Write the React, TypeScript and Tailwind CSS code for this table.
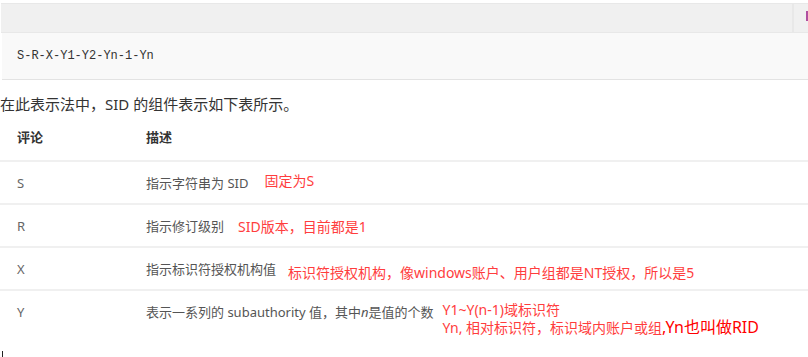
import React from "react";

const sans = "font-['Noto_Sans','Noto_Sans_CJK_SC',sans-serif]";

type Row = {
  key: string;
  desc: React.ReactNode;
  note: React.ReactNode;
  noteClass: string;
};

const rows: Row[] = [
  {
    key: "S",
    desc: "指示字符串为 SID",
    note: "固定为S",
    noteClass: "ml-[16px] -translate-y-[2px]",
  },
  {
    key: "R",
    desc: "指示修订级别",
    note: "SID版本，目前都是1",
    noteClass: "ml-[14px] translate-y-[1px]",
  },
  {
    key: "X",
    desc: "指示标识符授权机构值",
    note: "标识符授权机构，像windows账户、用户组都是NT授权，所以是5",
    noteClass: "ml-[12px] translate-y-[4px]",
  },
  {
    key: "Y",
    desc: (
      <>
        表示一系列的 subauthority 值，其中<i>n</i>是值的个数
      </>
    ),
    note: (
      <div className="flex flex-col leading-[16px]">
        <span>Y1~Y(n-1)域标识符</span>
        <span className="flex items-end">
          Yn, 相对标识符，标识域内账户或组
          <span className="text-[16px] leading-[18px] text-[#ff0000]">,Yn也叫做RID</span>
        </span>
      </div>
    ),
    noteClass: "ml-[9px] -translate-y-[1px]",
  },
];

const App = () => {
  return (
    <div className={`w-[808px] h-[357px] bg-white overflow-hidden ${sans}`}>
      {/* code block header strip */}
      <div className="mt-[3px] ml-[1px] h-[30px] bg-[#f0f0f0] border-t border-b border-[#e8e8e8] flex justify-end">
        <div className="w-[16px] h-full border-l-2 border-[#e8e8e8] flex justify-end pt-[7px]">
          <div className="w-[2px] h-[10px] bg-[#b04fa0]" />
        </div>
      </div>
      <div className="ml-[2px] h-[47px] bg-[#f9f9f9] border-b border-[#e3e3e3] flex items-center pl-[15px]">
        <span className="font-['Liberation_Mono',monospace] text-[12px] text-[#333]">
          S-R-X-Y1-Y2-Yn-1-Yn
        </span>
      </div>

      <p className="mt-[14px] text-[15px] leading-[20px] text-[#333]">
        在此表示法中，SID 的组件表示如下表所示。
      </p>

      {/* component table */}
      <div className="mt-[2px]">
        <div className="h-[46px] flex items-center border-b-2 border-[#f0f0f0] text-[13px] font-bold text-[#333]">
          <div className="w-[146px] pl-[17px]">评论</div>
          <div>描述</div>
        </div>
        {rows.map((row, i) => (
          <div
            key={row.key}
            className={`flex ${
              i === rows.length - 1
                ? "h-[60px] items-start pt-[12px]"
                : "h-[43px] items-center border-b-2 border-[#f0f0f0]"
            }`}
          >
            <div className="w-[146px] pl-[17px] text-[13px] leading-[18px] text-[#666]">{row.key}</div>
            <div className="flex items-start">
              <span className="text-[13px] leading-[18px] text-[#555]">{row.desc}</span>
              <div className={`text-[14px] leading-[18px] text-[#ff3d3d] whitespace-nowrap ${row.noteClass}`}>
                {row.note}
              </div>
            </div>
          </div>
        ))}
      </div>
      <div className="ml-[2px] w-[1px] h-[6px] bg-[#222]" />
    </div>
  );
};

export default App;
